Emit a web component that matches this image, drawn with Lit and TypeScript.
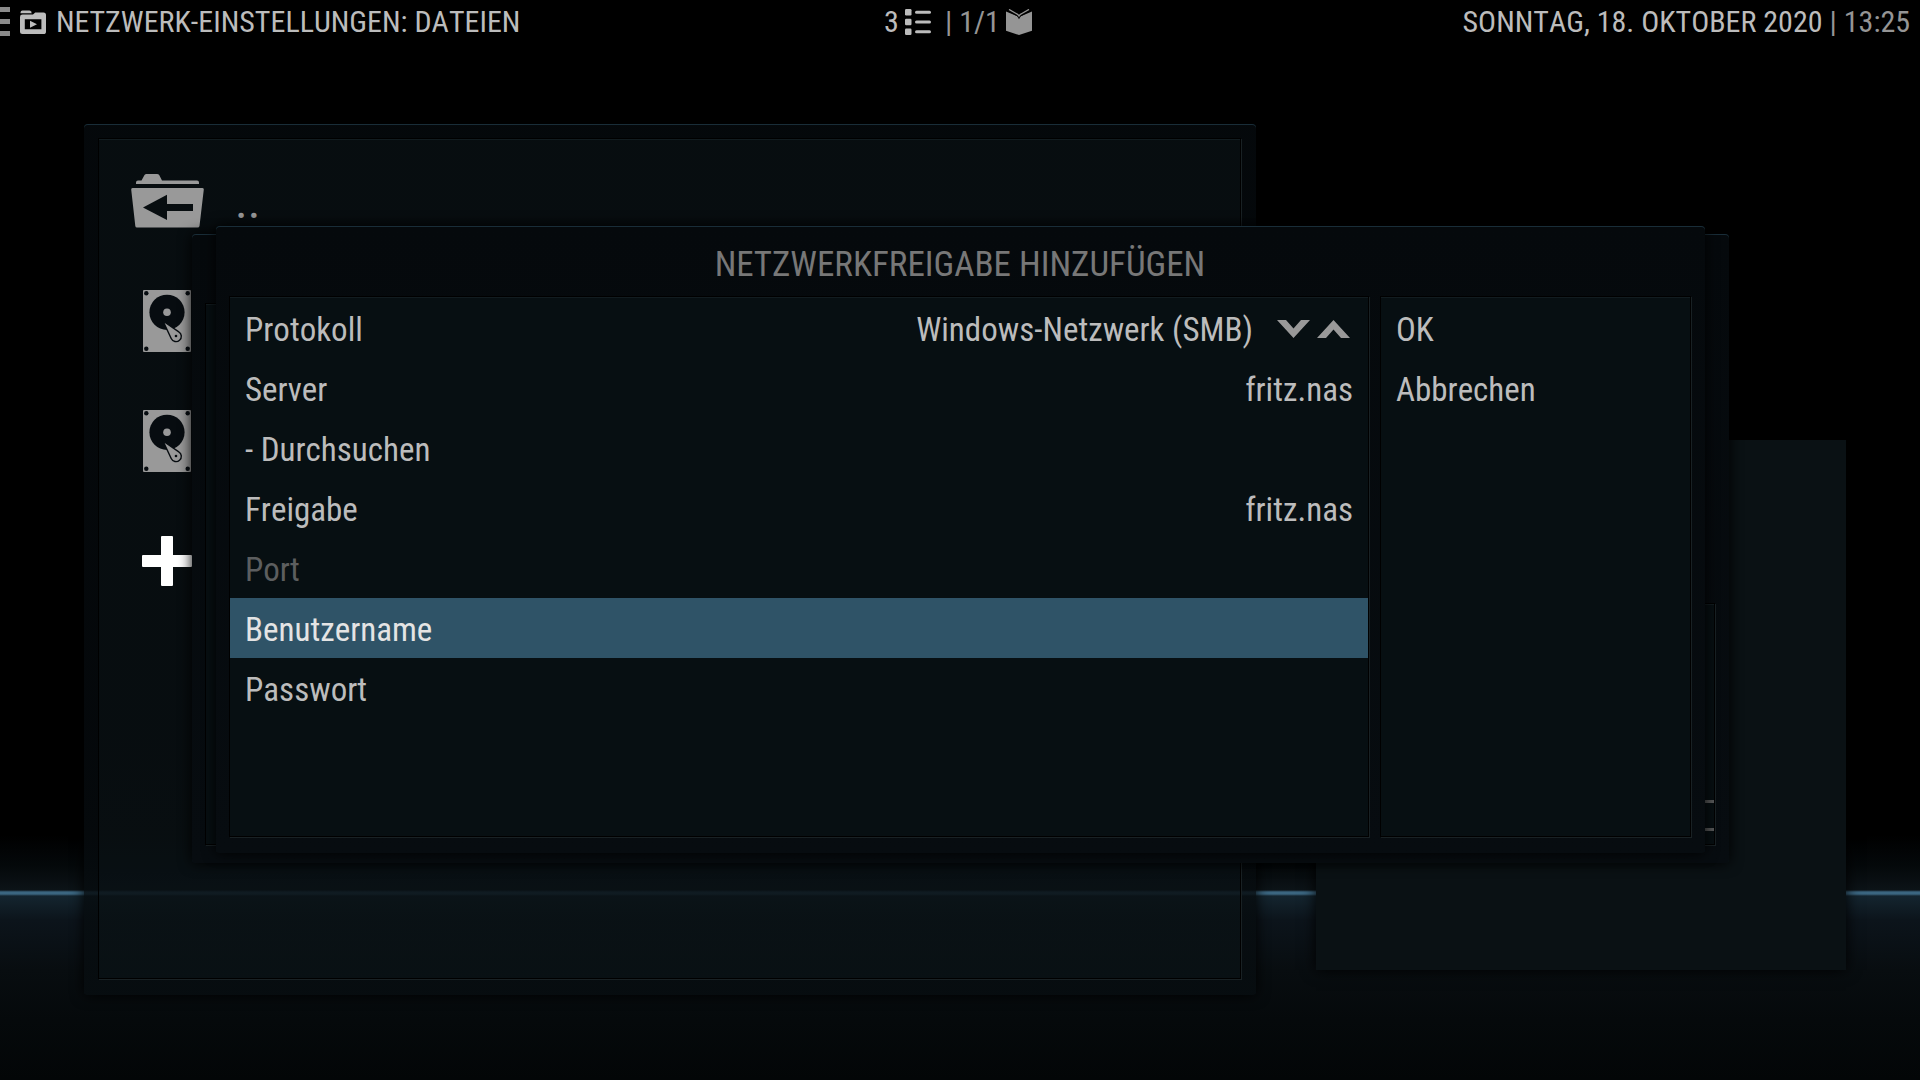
import { LitElement, html, css, svg, nothing } from "lit";
import { customElement, state } from "lit/decorators.js";
import { classMap } from "lit/directives/class-map.js";

interface Field {
  id: string;
  label: string;
  value: string;
  type?: string;
  disabled?: boolean;
}

const protocols = ["Windows-Netzwerk (SMB)"];

const serverField: Field = { id: "server", label: "Server", value: "fritz.nas" };

const fields: Field[] = [
  { id: "share", label: "Freigabe", value: "fritz.nas" },
  { id: "port", label: "Port", value: "", disabled: true },
  { id: "user", label: "Benutzername", value: "" },
  { id: "password", label: "Passwort", value: "", type: "password" },
];

const icon = (width: number, height: number, content: unknown) => html`
  <svg width=${width} height=${height} viewBox="0 0 ${width} ${height}" fill="currentColor" aria-hidden="true">${content}</svg>
`;

const menuIcon = icon(10, 30, svg`<path fill="#8a8a8a" d="M0 0h10v5H0zM0 12h10v5H0zM0 24h10v5H0z" />`);

const mediaFolderIcon = icon(26, 24, svg`
  <path d="M.5 3.2V2.4Q.5.4 2.5.4h6.800q1 0 1.500.8l1 2z" />
  <path fill-rule="evenodd" d="M2.500 4.600h10.500l2.200-2.200h8.300Q26 2.400 26 4.900v16.500Q26 24 23.500 24h-21Q0 24 0 21.500V7Q0 4.600 2.500 4.600zM4.800 9.200v10h16.600v-10z" />
  <path d="M10 10.700v7l7-3.500z" />
`);

const listIcon = icon(26, 26, svg`
  <rect x="0" y="0" width="6.500" height="6.500" rx="1.200" />
  <rect x="0" y="9.800" width="6.500" height="6.500" rx="1.200" />
  <rect x="0" y="19.500" width="6.500" height="6.500" rx="1.200" />
  <rect x="10" y="1.800" width="16" height="3" rx="1.500" />
  <rect x="10" y="11.500" width="16" height="3" rx="1.500" />
  <rect x="10" y="21.200" width="16" height="3" rx="1.500" />
`);

const bookIcon = icon(26, 26, svg`
  <path d="M0 2.500 13 8 26 2.500v19.200L13 26 0 21.700z" />
  <path d="M3 .6 10.500 5Q12.300 5.800 13 7 13.700 5.800 15.500 5L23 .6" fill="none" stroke="#000" stroke-width="3.400" />
  <path d="M3 .4 10.500 4.700Q12.300 5.600 13 7 13.700 5.600 15.500 4.700L23 .4" fill="none" stroke="currentColor" stroke-width="1.300" />
`);

const parentFolderIcon = icon(73, 54, svg`
  <path d="M5 10V8.500Q5 6.500 7 6.500H10.500L13.500 1Q14.200 0 15.500 0H26Q27.500 0 28.200 1L31 6.500H66Q68 6.500 68 8.500V10z" />
  <path fill-rule="evenodd" d="M1.500 14h70Q73 14 72.800 15.500L68.500 52Q68.300 53.500 66.500 53.500H6Q4.500 53.500 4.300 52L.2 15.500Q0 14 1.500 14zM12 33.500 36 46V37H62V30H36V20.700z" />
`);

const driveIcon = icon(50, 62, svg`
  <rect x="1" y="0" width="48" height="62" rx="1" />
  <g class="hole">
    <circle cx="4.300" cy="3.200" r="2.200" />
    <circle cx="45.700" cy="3.200" r="2.200" />
    <circle cx="4.300" cy="58.800" r="2.200" />
    <circle cx="45.700" cy="58.800" r="2.200" />
    <circle cx="25" cy="22.300" r="17.600" />
  </g>
  <circle cx="25" cy="22.300" r="3.800" />
  <path class="arm" d="M21 31 36.800 41.800A5.300 5.300 0 1 1 29.200 48.500z" />
  <circle class="hole" cx="34" cy="46" r="1.300" />
`);

const plusIcon = icon(50, 50, svg`
  <path d="M20 0h10q1 0 1 1v18h18q1 0 1 1v10q0 1-1 1H31v18q0 1-1 1H20q-1 0-1-1V31H1q-1 0-1-1V20q0-1 1-1h18V1q0-1 1-1z" />
`);

const downIcon = icon(33, 18, svg`<path d="M0 0h9l7.500 8.500L24 0h9L16.500 18z" />`);
const upIcon = icon(33, 18, svg`<path d="M0 18h9l7.500-8.500L24 18h9L16.500 0z" />`);

@customElement("app-root")
export class AppRoot extends LitElement {
  @state() private focused = "user";
  @state() private protocol = 0;

  static styles = css`
    :host {
      display: block;
      font-family: "Roboto Condensed", Roboto, sans-serif;
      font-size: 33px;
      font-kerning: none;
      color: #bcbcbc;
    }

    * {
      box-sizing: border-box;
    }

    svg {
      display: block;
      flex: none;
    }

    button,
    input {
      margin: 0;
      padding: 0;
      border: 0;
      outline: 0;
      background: none;
      font: inherit;
      font-kerning: none;
      color: inherit;
    }

    .stage {
      position: relative;
      min-height: 100vh;
      overflow: hidden;
      background: linear-gradient(
        to top,
        #030607 0,
        #05090b 60px,
        #080d10 110px,
        #0c141b 160px,
        #14252f 184px,
        #3b6680 186px,
        #3b6680 188px,
        #0c1317 190px,
        #04080a 215px,
        #000 245px
      );
    }

    .topbar {
      display: grid;
      grid-template-columns: 1fr auto 1fr;
      align-items: center;
      height: 43px;
      font-size: 30px;
      white-space: nowrap;
    }

    .crumb,
    .counter,
    .clock {
      display: flex;
      align-items: center;
      gap: 10px;
    }

    .counter {
      gap: 6px;
      padding-right: 4px;
    }

    .clock {
      justify-content: flex-end;
      gap: 7px;
      padding-right: 10px;
    }

    .heading {
      margin: 0;
      font-size: inherit;
      font-weight: 400;
    }

    .dim {
      color: #959595;
    }

    .pages {
      padding-left: 8px;
    }

    .window {
      position: absolute;
      border-radius: 4px;
      box-shadow: 0 0 14px #000, inset 0 1px #192d38;
    }

    .well {
      box-shadow: 0 0 0 1px #000, 1px 1px 0 1px #192124, inset 0 1px #121c20;
    }

    .browser {
      inset: 124px 664px 85px 84px;
      display: grid;
      padding: 15px 16px 17px 15px;
      background: linear-gradient(rgba(5, 9, 12, 0.9) 70%, rgba(7, 13, 16, 0.8));
    }

    .browser .well {
      background: rgba(20, 36, 38, 0.2);
    }

    .files {
      margin: 0;
      padding: 2px 0 0;
      list-style: none;
    }

    .file {
      display: grid;
      grid-template-columns: 136px 1fr;
      align-items: center;
      width: 100%;
      height: 120px;
      font-size: 48px;
      text-align: left;
      color: #999;
    }

    .file svg {
      justify-self: center;
    }

    .file.active {
      color: #fff;
    }

    .hole {
      fill: #070c10;
    }

    .arm {
      stroke: #070c10;
      stroke-width: 1.4px;
    }

    .preview {
      position: absolute;
      inset: 440px 74px 110px 1316px;
      background: #0a1114;
      box-shadow: 0 0 14px #000;
    }

    .dialog {
      background: linear-gradient(#05090c, #070c10);
    }

    .dialog .well {
      padding-top: 1px;
      background: #070f12;
    }

    .sources {
      inset: 234px 191px 217px 192px;
      display: grid;
      grid-template-columns: 1fr 309px;
      gap: 12px;
      padding: 70px 15px 19px 14px;
    }

    .sources .side {
      display: flex;
      align-items: flex-end;
      margin-top: 300px;
      padding-bottom: 13px;
    }

    .slot {
      flex: 1;
      height: 31px;
      border: solid #5a5b5c;
      border-width: 3px 0;
    }

    .share {
      inset: 226px 215px 227px 216px;
      display: grid;
      grid-template-rows: 71px 1fr;
      padding: 0 15px 17px 14px;
    }

    .title {
      margin: 0;
      padding-top: 3px;
      font-size: 35px;
      font-weight: 400;
      line-height: 72px;
      text-align: center;
      color: #777;
    }

    .body {
      display: grid;
      grid-template-columns: 1fr 309px;
      gap: 13px;
    }

    .row {
      display: flex;
      align-items: center;
      width: 100%;
      height: 60px;
      padding: 2px 15px 0;
      text-align: left;
      white-space: nowrap;
    }

    .row input {
      flex: 1;
      min-width: 0;
      text-align: right;
    }

    .row.focused {
      background: #2f5367;
      color: #e4e4e4;
    }

    .row.disabled {
      color: #5c5e5f;
    }

    .value {
      flex: 1;
      text-align: right;
    }

    .spin {
      display: flex;
      gap: 7px;
      padding: 0 3px 0 24px;
      color: #999;
    }
  `;

  private step(delta: number) {
    this.protocol = (this.protocol + delta + protocols.length) % protocols.length;
  }

  private renderField(field: Field) {
    const classes = {
      row: true,
      focused: this.focused === field.id,
      disabled: !!field.disabled,
    };
    return html`
      <div class=${classMap(classes)}>
        <label for=${field.id}>${field.label}</label>
        <input
          id=${field.id}
          type=${field.type ?? "text"}
          autocomplete="off"
          .value=${field.value}
          ?disabled=${field.disabled}
          @focus=${() => (this.focused = field.id)}
        />
      </div>
    `;
  }

  private renderFile(glyph: unknown, name: string, label: string, active = false) {
    return html`
      <li>
        <button class=${classMap({ file: true, active })} type="button" aria-label=${label}>
          ${glyph}${name ? html`<span>${name}</span>` : nothing}
        </button>
      </li>
    `;
  }

  render() {
    return html`
      <div class="stage">
        <header class="topbar">
          <div class="crumb">
            ${menuIcon}${mediaFolderIcon}
            <h1 class="heading">NETZWERK-EINSTELLUNGEN: DATEIEN</h1>
          </div>
          <div class="counter">
            <span>3</span>${listIcon}
            <span class="dim pages">| 1/1</span>
            <span class="dim">${bookIcon}</span>
          </div>
          <div class="clock">
            <span>SONNTAG, 18. OKTOBER 2020</span>
            <span class="dim">| 13:25</span>
          </div>
        </header>

        <section class="window browser">
          <ul class="files well">
            ${this.renderFile(parentFolderIcon, "..", "..")}
            ${this.renderFile(driveIcon, "", "Laufwerk 1")}
            ${this.renderFile(driveIcon, "", "Laufwerk 2")}
            ${this.renderFile(plusIcon, "", "Hinzufügen", true)}
          </ul>
        </section>

        <aside class="preview"></aside>

        <section class="window dialog sources">
          <div class="well"></div>
          <div class="well side"><div class="slot"></div></div>
        </section>

        <section class="window dialog share" role="dialog" aria-labelledby="title">
          <h2 class="title" id="title">NETZWERKFREIGABE HINZUFÜGEN</h2>
          <div class="body">
            <form class="well">
              <div class="row">
                <label for="protocol">Protokoll</label>
                <output class="value" id="protocol">${protocols[this.protocol]}</output>
                <div class="spin">
                  <button type="button" aria-label="Nächstes Protokoll" @click=${() => this.step(1)}>${downIcon}</button>
                  <button type="button" aria-label="Vorheriges Protokoll" @click=${() => this.step(-1)}>${upIcon}</button>
                </div>
              </div>
              ${this.renderField(serverField)}
              <button class="row" type="button">- Durchsuchen</button>
              ${fields.map((field) => this.renderField(field))}
            </form>
            <div class="well">
              <button class="row" type="button">OK</button>
              <button class="row" type="button">Abbrechen</button>
            </div>
          </div>
        </section>
      </div>
    `;
  }
}
